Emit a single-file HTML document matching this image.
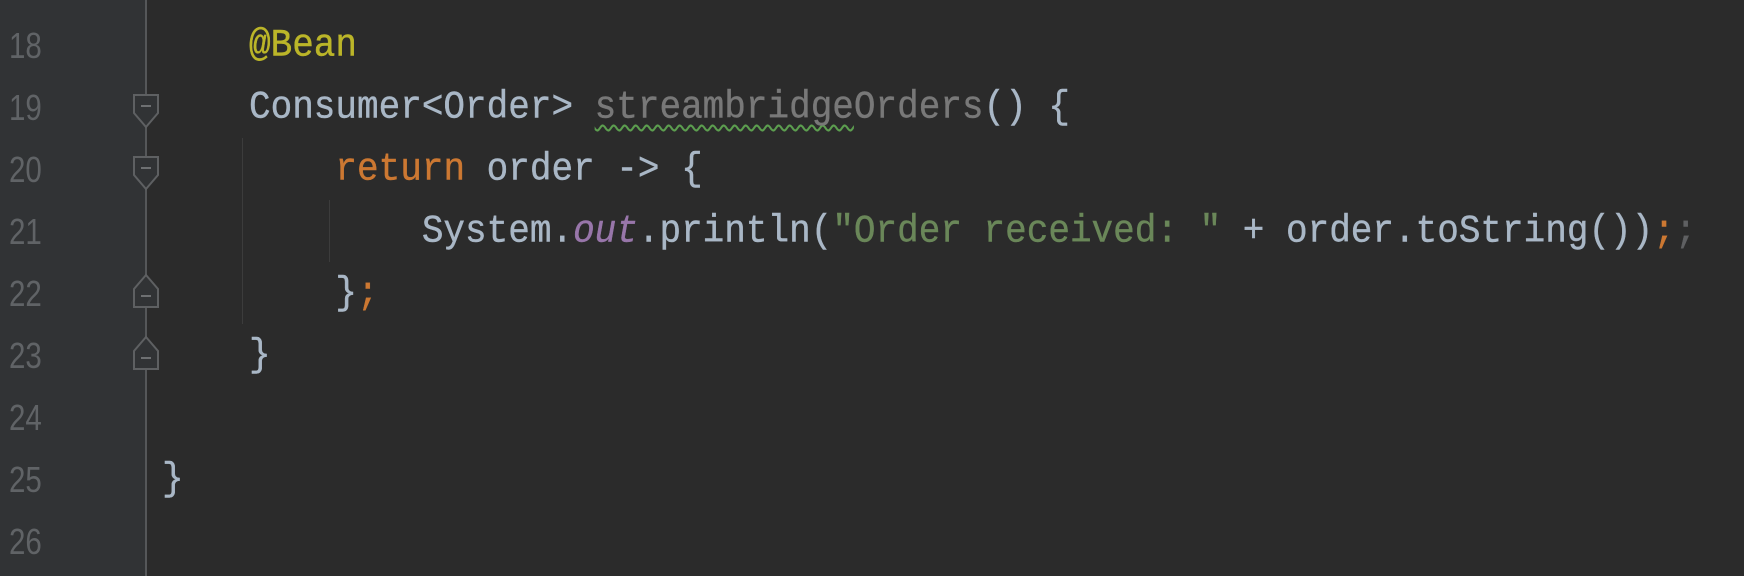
<!DOCTYPE html>
<html><head><meta charset="utf-8"><style>
body{margin:0;width:1744px;height:576px;background:#2b2b2b;overflow:hidden;position:relative}
.g{position:absolute;left:0;top:0;width:146px;height:576px;background:#313335}
.gl{position:absolute;left:145px;top:0;width:2px;height:576px;background:#555759}
.n{position:absolute;left:9px;font:36px "Liberation Sans",sans-serif;color:#606366;height:62px;line-height:62px;transform:scaleX(0.82);transform-origin:left center}
.c{position:absolute;left:249px;font:36px "Liberation Mono",monospace;color:#a9b7c6;height:62px;line-height:62px;white-space:pre;transform:scaleY(1.08);-webkit-text-stroke:0.4px currentColor}
.a{color:#bbb529}.k{color:#cc7832}.s{color:#6a8759}.f{color:#9876aa;font-style:italic}.u{color:#787878}
.w{text-decoration:underline wavy #5c9e4f;text-decoration-thickness:2px;text-underline-offset:6px;text-decoration-skip-ink:none}
.ig{position:absolute;width:1px;background:#3c3c3c}
svg{position:absolute}
</style></head><body>
<div class="g"></div><div class="gl"></div>
<div class="n" style="top:15px">18</div>
<div class="n" style="top:77px">19</div>
<div class="n" style="top:139px">20</div>
<div class="n" style="top:201px">21</div>
<div class="n" style="top:263px">22</div>
<div class="n" style="top:325px">23</div>
<div class="n" style="top:387px">24</div>
<div class="n" style="top:449px">25</div>
<div class="n" style="top:511px">26</div>
<svg style="left:133px;top:94px" width="26" height="36"><path d="M1 1H25V19L13 33L1 19Z" fill="#313335" stroke="#5e6062" stroke-width="2"/><path d="M8 12H18" stroke="#6e7072" stroke-width="2"/></svg>
<svg style="left:133px;top:156px" width="26" height="36"><path d="M1 1H25V19L13 33L1 19Z" fill="#313335" stroke="#5e6062" stroke-width="2"/><path d="M8 12H18" stroke="#6e7072" stroke-width="2"/></svg>
<svg style="left:133px;top:272px" width="26" height="36"><path d="M1 35H25V17L13 3L1 17Z" fill="#313335" stroke="#5e6062" stroke-width="2"/><path d="M8 24H18" stroke="#6e7072" stroke-width="2"/></svg>
<svg style="left:133px;top:334px" width="26" height="36"><path d="M1 35H25V17L13 3L1 17Z" fill="#313335" stroke="#5e6062" stroke-width="2"/><path d="M8 24H18" stroke="#6e7072" stroke-width="2"/></svg>
<div class="ig" style="left:242px;top:138px;height:186px"></div>
<div class="ig" style="left:329px;top:200px;height:62px"></div>
<div class="c" style="top:15px"><span class="a">@Bean</span></div>
<div class="c" style="top:77px">Consumer&lt;Order&gt; <span class="u"><span class="w">streambridge</span>Orders</span>() {</div>
<div class="c" style="top:139px">    <span class="k">return</span> order -&gt; {</div>
<div class="c" style="top:201px">        System.<span class="f">out</span>.println(<span class="s">"Order received: "</span> + order.toString())<span class="k">;</span><span style="color:#5f6062">;</span></div>
<div class="c" style="top:263px">    }<span class="k">;</span></div>
<div class="c" style="top:325px">}</div>
<div class="c" style="top:449px;left:162px">}</div>
</body></html>
